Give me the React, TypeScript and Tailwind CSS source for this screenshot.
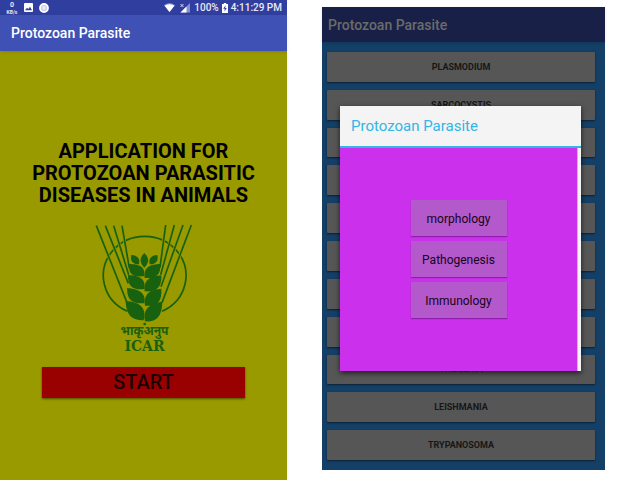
type Row = { id: number; name?: string };

const rows: Row[] = [
  { id: 1, name: "PLASMODIUM" },
  { id: 2, name: "SARCOCYSTIS" },
  { id: 3 },
  { id: 4 },
  { id: 5 },
  { id: 6 },
  { id: 7 },
  { id: 8 },
  { id: 9, name: "THEILERIA" },
  { id: 10, name: "LEISHMANIA" },
  { id: 11, name: "TRYPANOSOMA" },
];

const topics = ["morphology", "Pathogenesis", "Immunology"];

const leftAwns = ["M34 33L126 264", "M61 33L130 206", "M86 33L131 180", "M111 33L133 160"];
const rightAwns = ["M319 31L231 264", "M294 31L228 216", "M268 31L227 180", "M242 31L225 158"];

function StatusBar() {
  return (
    <div className="flex h-[15px] items-center bg-[#303f9f] pr-[5px] pl-[6px] text-[10px] leading-[15px] font-medium text-[#e8eaf6]">
      <div className="flex w-[12px] flex-col items-center font-bold">
        <span className="text-[7px] leading-[8px]">0</span>
        <span className="text-[5px] leading-[6px]">KB/s</span>
      </div>
      <svg className="ml-[6px]" width="9" height="9" viewBox="0 0 9 9" aria-hidden="true">
        <rect width="9" height="9" rx="1" fill="#fff" />
        <path d="M1 7.2L3 4.7L4.3 6L6 3.8L8 7.2Z" fill="#303f9f" />
      </svg>
      <svg className="ml-[6px]" width="10" height="10" viewBox="0 0 10 10" aria-hidden="true">
        <circle cx="5" cy="5" r="4" fill="#c5cae9" stroke="#fff" strokeWidth="1.8" />
        <circle cx="5" cy="5" r="2" fill="#e8eaf6" />
      </svg>
      <svg className="ml-auto" width="11" height="9" viewBox="0 0 11 9" aria-hidden="true">
        <path d="M0 2.2Q5.500 -1.800 11 2.200L5.500 9Z" fill="#9fa8da" />
        <path d="M0.700 2.800Q5.500 -0.500 10.300 2.800L5.500 9Z" fill="#fff" />
      </svg>
      <svg className="ml-[5px]" width="10" height="10" viewBox="0 0 10 10" aria-hidden="true">
        <path d="M10 0V9.500H0.500Z" fill="#8590cf" />
        <path d="M6.500 3.500V9.500H0.500Z" fill="#fff" />
        <path d="M0.500 1L3.500 4M3.500 1L0.500 4" stroke="#e8eaf6" strokeWidth="0.900" />
      </svg>
      <span className="ml-[4px]">100%</span>
      <svg className="ml-[3px]" width="6" height="10" viewBox="0 0 6 10" aria-hidden="true">
        <path d="M0 1H1.800V0H4.200V1H6V10H0Z" fill="#fff" />
        <path d="M3.600 2.300L1.200 5.800H2.800L2.400 8.500L4.800 5H3.200Z" fill="#303f9f" />
      </svg>
      <span className="ml-[3px]">4:11:29 PM</span>
    </div>
  );
}

function Emblem() {
  return (
    <div className="mt-[17px] flex flex-col items-center pl-[2px] text-[#17610f]">
      <svg width="120" height="103" viewBox="0 25 360 309" role="img" aria-label="Wheat emblem">
        <path d="M127 290A124 118 0 1 1 231 290" fill="none" stroke="currentColor" strokeWidth="5" />
        {[...leftAwns, ...rightAwns].map((d) => (
          <g key={d} fill="none">
            <path d={d} stroke="#999900" strokeWidth="9" />
            <path d={d} stroke="currentColor" strokeWidth="5" />
          </g>
        ))}
        <g fill="currentColor">
          <path d="M178 115C193 130 193 144 178 159C163 144 163 130 178 115Z" />
          <path d="M139 121C158 122 166 133 162 149C142 149 135 138 139 121Z" />
          <path d="M217 121C198 122 190 133 194 149C214 149 221 138 217 121Z" />
          <path d="M131 148C160 149 182 153 177 185C147 187 131 183 131 148Z" />
          <path d="M226 148C197 149 174 156 179 190C209 192 228 185 226 148Z" />
          <path d="M129 181C159 183 183 189 178 223C147 227 128 219 129 181Z" />
          <path d="M229 182C199 184 174 194 179 230C210 233 231 222 229 182Z" />
          <path d="M126 220C158 223 184 232 178 266C145 267 126 260 126 220Z" />
          <path d="M229 222C199 224 174 235 180 273C213 276 232 263 229 222Z" />
          <path d="M122 259C159 261 187 276 176 317C141 317 124 303 122 259Z" />
          <path d="M232 261C197 266 172 280 180 320C214 322 231 306 232 261Z" />
          <circle cx="179" cy="328" r="4" />
        </g>
      </svg>
      <p lang="hi" className="font-['Noto_Sans_Devanagari','Noto_Sans',sans-serif] text-[12px] leading-[13px] font-bold">
        भाकृअनुप
      </p>
      <p className="font-['DejaVu_Serif',serif] text-[14px] leading-[14px] font-bold">ICAR</p>
    </div>
  );
}

function StartScreen() {
  return (
    <section className="flex min-h-screen flex-col bg-[#999900]">
      <StatusBar />
      <header className="flex h-[36px] items-center bg-[#3f51b5] px-[11px] shadow-sm">
        <h1 className="text-[14px] leading-[16px] font-medium text-white">Protozoan Parasite</h1>
      </header>
      <main className="flex flex-col items-center pt-[89px]">
        <h2 className="text-center text-[20px] leading-[22px] font-bold text-black">
          APPLICATION FOR
          <br />
          PROTOZOAN PARASITIC
          <br />
          DISEASES IN ANIMALS
        </h2>
        <Emblem />
        <div className="mt-[14px] w-full px-[42px]">
          <button type="button" className="h-[31px] w-full bg-[#990000] text-[20px] leading-[31px] font-medium text-[#1c0000] shadow-[0_1px_2px_rgba(0,0,0,0.5)]">
            START
          </button>
        </div>
      </main>
    </section>
  );
}

function TopicDialog() {
  return (
    <div
      role="dialog"
      aria-labelledby="topic-title"
      className="absolute top-[99px] right-[24px] left-[18px] flex h-[265px] flex-col bg-[#f4f4f4] shadow-[0_2px_5px_rgba(0,0,0,0.7)]"
    >
      <h2 id="topic-title" className="border-b-2 border-[#33b5e5] px-[11px] text-[15px] leading-[40px] text-[#33b5e5]">
        Protozoan Parasite
      </h2>
      <div className="mr-[3px] flex flex-1 flex-col items-center justify-center gap-[5px] border-r border-[#e9a0f8] bg-[#cb30ec] pb-[2px]">
        {topics.map((topic) => (
          <button
            key={topic}
            type="button"
            className="h-[36px] w-[96px] bg-[#b359cb] pt-[2px] text-[12px] text-[#16041a] shadow-[0_1px_1px_rgba(60,0,80,0.4)]"
          >
            {topic}
          </button>
        ))}
      </div>
    </div>
  );
}

function ListScreen() {
  return (
    <section className="relative mt-[7px] mb-[10px] flex flex-col bg-[#143f66]">
      <header className="flex h-[35px] items-center bg-[#192048] px-[6px] shadow-sm">
        <h1 className="text-[14px] leading-[16px] font-medium text-[#6b6b6b]">Protozoan Parasite</h1>
      </header>
      <ul className="flex flex-1 flex-col gap-[8px] pt-[10px] pr-[10px] pb-[10px] pl-[5px]">
        {rows.map((row) => (
          <li key={row.id} className="flex flex-1">
            <button
              type="button"
              className="w-full rounded-[1px] bg-[#565656] text-[9px] leading-[12px] font-bold text-[#161616] shadow-[0_1px_2px_rgba(0,0,0,0.5)]"
            >
              {row.name}
            </button>
          </li>
        ))}
      </ul>
      <TopicDialog />
    </section>
  );
}

export default function App() {
  return (
    <div className="grid min-h-screen grid-cols-[287fr_283fr] gap-x-[35px] bg-white pr-[35px] font-['Roboto',sans-serif]">
      <StartScreen />
      <ListScreen />
    </div>
  );
}
